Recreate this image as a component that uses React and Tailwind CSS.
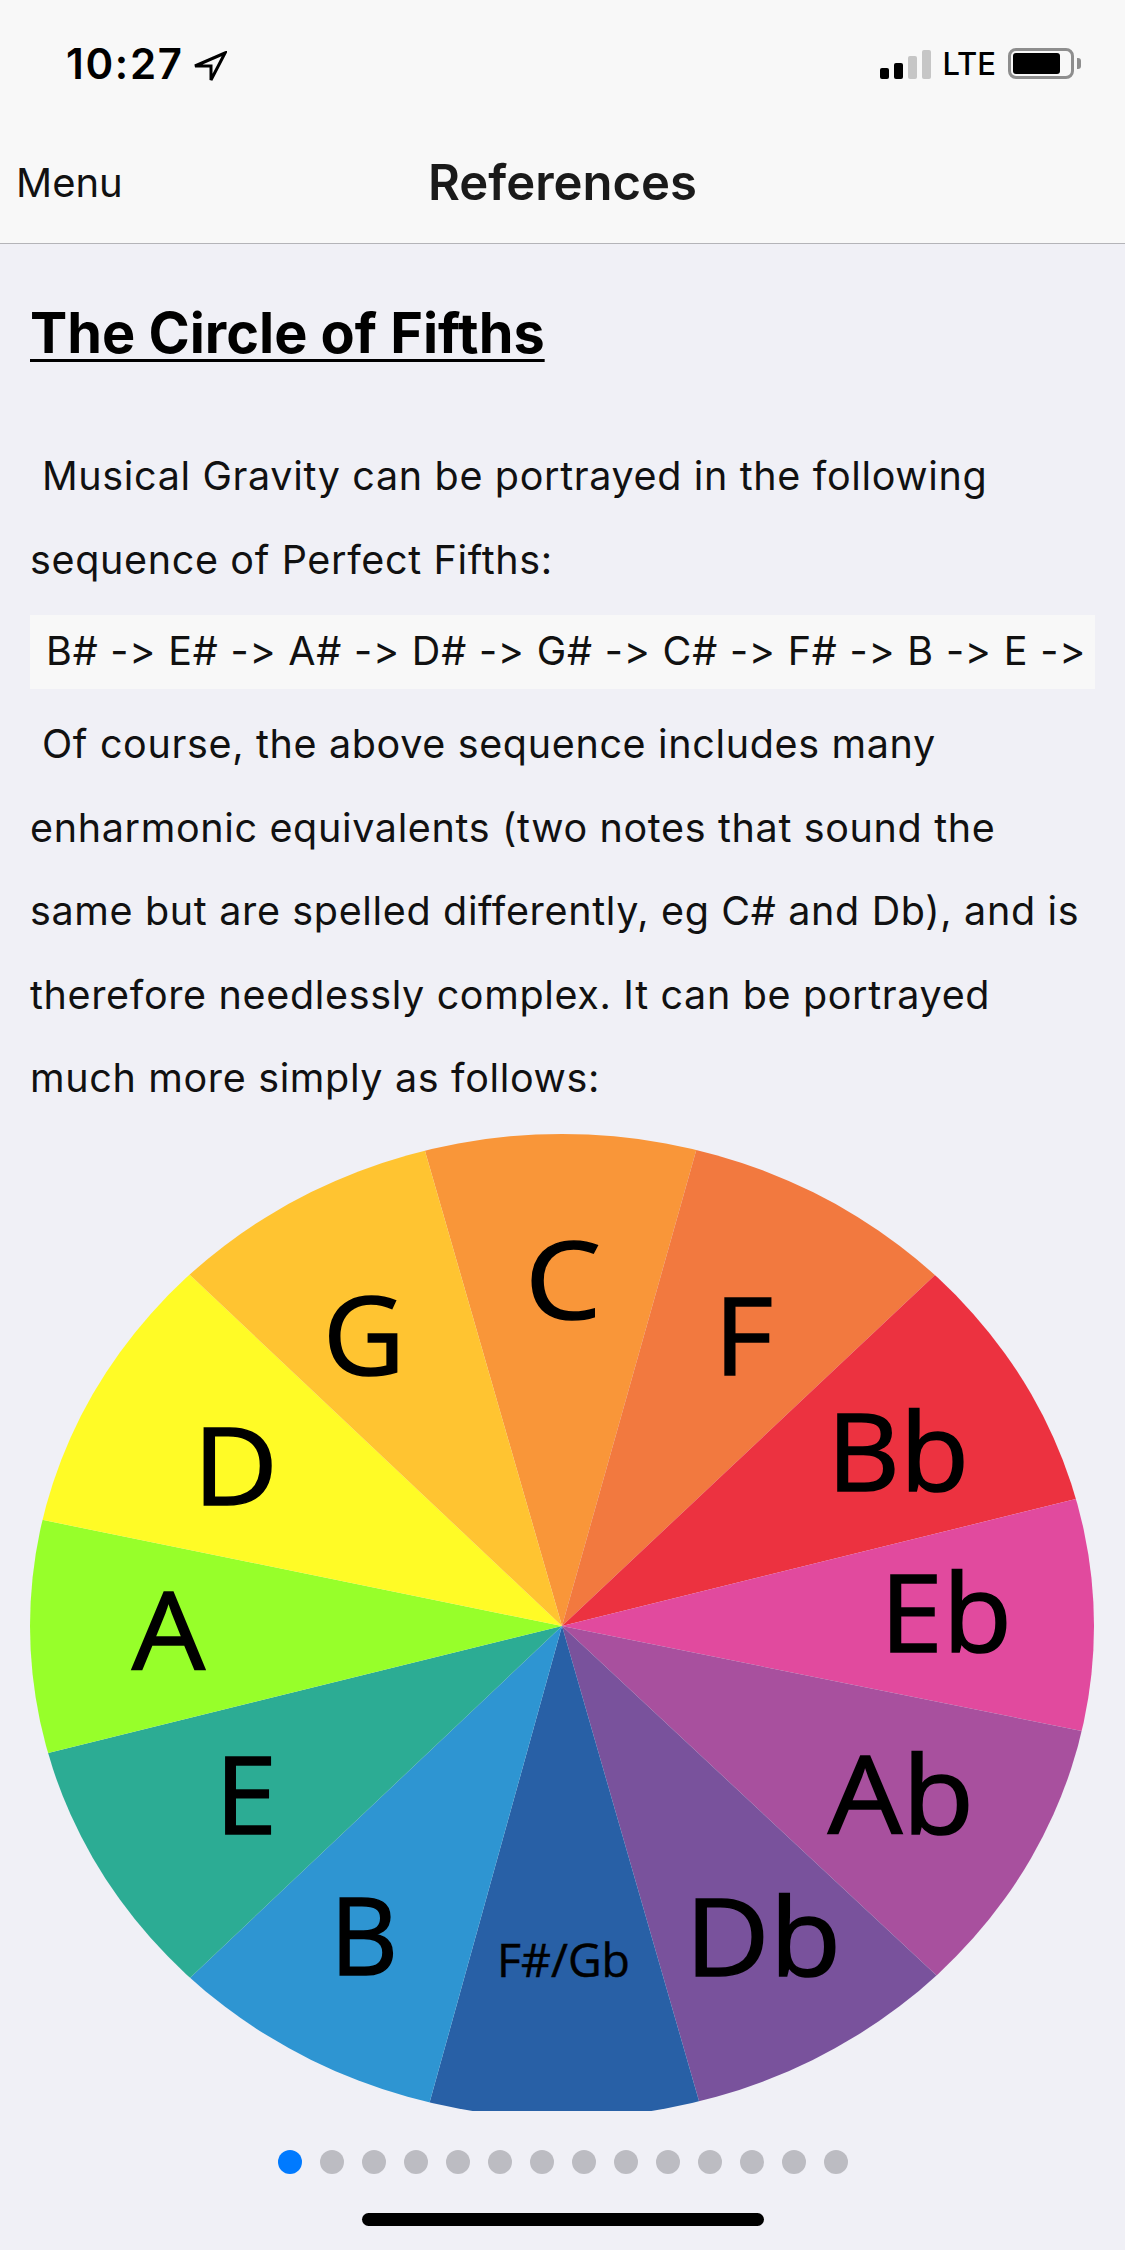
const FONT = "font-['Inter','Liberation_Sans',sans-serif] [font-feature-settings:'calt'_0,'liga'_0]";

// wheel geometry, in page pixels
const CX = 562;
const CY = 1625;
const wedges = [
  { color: "#f99639", from: [425, 1150], to: [696, 1150] },
  { color: "#f2793f", from: [696, 1150], to: [935, 1274] },
  { color: "#ec3240", from: [935, 1274], to: [1076, 1498] },
  { color: "#e14a9e", from: [1076, 1498], to: [1082, 1730] },
  { color: "#a8509e", from: [1082, 1730], to: [936, 1974] },
  { color: "#79529c", from: [936, 1974], to: [699, 2100] },
  { color: "#2860a6", from: [699, 2100], to: [430, 2100] },
  { color: "#2e95d2", from: [430, 2100], to: [192, 1975] },
  { color: "#2cac94", from: [192, 1975], to: [48, 1752] },
  { color: "#97ff2a", from: [48, 1752], to: [43, 1519] },
  { color: "#fffb26", from: [43, 1519], to: [190, 1274] },
  { color: "#ffc431", from: [190, 1274], to: [425, 1150] },
];

const labels = [
  { text: "C", x: 525, y: 1318, w: 76 },
  { text: "G", x: 323, y: 1374, w: 82 },
  { text: "F", x: 714, y: 1374, w: 59 },
  { text: "Bb", x: 827, y: 1490, w: 142 },
  { text: "D", x: 193, y: 1504, w: 85 },
  { text: "Eb", x: 880, y: 1651, w: 132 },
  { text: "A", x: 132, y: 1669, w: 73 },
  { text: "E", x: 215, y: 1833, w: 62 },
  { text: "Ab", x: 828, y: 1833, w: 146 },
  { text: "B", x: 330, y: 1974, w: 68 },
  { text: "Db", x: 685, y: 1975, w: 156 },
  { text: "F#/Gb", x: 497, y: 1976, w: 133, small: true },
];

// push the rim point out past the ellipse, the clip path trims it back
function far([x, y]) {
  return `${CX + (x - CX) * 1.15},${CY + (y - CY) * 1.15}`;
}

function Wheel() {
  return (
    <svg
      viewBox="30 1120 1065 990"
      className="block w-[1065px] h-[990px]"
    >
      <defs>
        <clipPath id="rim">
          <ellipse cx={CX} cy={CY} rx="532" ry="492" />
        </clipPath>
      </defs>
      <g clipPath="url(#rim)">
        {wedges.map((w, i) => (
          <polygon
            key={i}
            fill={w.color}
            points={`${CX},${CY} ${far(w.from)} ${far(w.to)}`}
          />
        ))}
      </g>
      {labels.map((l) => (
        <text
          key={l.text}
          x={l.x}
          y={l.y}
          textLength={l.w}
          lengthAdjust="spacingAndGlyphs"
          fontFamily="'Open Sans', sans-serif"
          fontWeight="500"
          fontSize={l.small ? 46 : 108}
          fill="#000"
          stroke="#000"
          strokeWidth={l.small ? 0.5 : 1.6}
        >
          {l.text}
        </text>
      ))}
    </svg>
  );
}

function StatusBar() {
  return (
    <div className="h-[127px] flex justify-between items-start pt-[42px] pl-[66px] pr-[44px]">
      <div className="flex items-start gap-[9px]">
        <span className="text-[42px] leading-[43px] font-semibold tracking-[1.7px] text-black">10:27</span>
        <svg width="34" height="31" viewBox="0 0 34 31" className="mt-[9px]">
          <path d="M32 2 L2 15 L18 15 L18 29 Z" fill="#f8f8f8" stroke="#000" strokeWidth="3" strokeLinejoin="miter" />
        </svg>
      </div>
      <div className="flex items-end h-[37px]">
        <div className="flex items-end gap-[5px]">
          <div className="w-[9px] h-[11px] rounded-[2px] bg-black"></div>
          <div className="w-[9px] h-[16px] rounded-[2px] bg-black"></div>
          <div className="w-[9px] h-[23px] rounded-[2px] bg-[#c6c6c6]"></div>
          <div className="w-[9px] h-[29px] rounded-[2px] bg-[#c6c6c6]"></div>
        </div>
        <span className="ml-[11px] mb-[-2px] text-[31px] leading-[34px] font-medium text-black">LTE</span>
        <div className="ml-[12px] flex items-center">
          <div className="w-[66px] h-[31px] border-[3px] border-[#8e8e8e] rounded-[8px] p-[2px]">
            <div className="w-[47px] h-full rounded-[3px] bg-black"></div>
          </div>
          <div className="ml-[3px] w-[4px] h-[11px] rounded-r-[3px] bg-[#8e8e8e]"></div>
        </div>
      </div>
    </div>
  );
}

function NavBar() {
  return (
    <div className="relative h-[116px] pb-[4px] flex items-center justify-center">
      <span className="absolute left-[16px] text-[40px] text-[#111]">Menu</span>
      <h1 className="text-[49px] font-semibold text-[#1a1a1a]">References</h1>
    </div>
  );
}

export default function App() {
  return (
    <div className={`${FONT} w-[1125px] h-[2250px] bg-[#f0f0f6] overflow-hidden`}>
      <header className="bg-[#f8f8f8] border-b border-[#b4b4b8]">
        <StatusBar />
        <NavBar />
      </header>

      <main className="px-[30px]">
        <h2 className="mt-[56px] text-[55.8px] leading-[66px] font-bold text-black underline decoration-[3px] underline-offset-[6px]">
          The Circle of Fifths
        </h2>
        <p className="mt-[69px] text-[39.5px] tracking-[0.65px] leading-[83.5px] text-[#111]">
          <span className="pl-[12px]">Musical Gravity can be portrayed in the following</span>
          <br />
          sequence of Perfect Fifths:
        </p>
        <div className="mt-[13px] h-[74px] bg-[#f8f8f8] overflow-hidden flex items-center pl-[16px]">
          <span className="whitespace-nowrap text-[39.5px] tracking-[0.8px] text-[#111]">
            B# -&gt; E# -&gt; A# -&gt; D# -&gt; G# -&gt; C# -&gt; F# -&gt; B -&gt; E -&gt; A -&gt; D -&gt; G -&gt; C -&gt; F
          </span>
        </div>
        <p className="mt-[14px] text-[39.5px] tracking-[0.65px] leading-[83.5px] text-[#111]">
          <span className="pl-[12px]">Of course, the above sequence includes many</span>
          <br />
          enharmonic equivalents (two notes that sound the
          <br />
          same but are spelled differently, eg C# and Db), and is
          <br />
          therefore needlessly complex. It can be portrayed
          <br />
          much more simply as follows:
        </p>
        <Wheel />
      </main>

      <div className="mt-[39px] flex justify-center gap-[18px]">
        {Array.from({ length: 14 }).map((_, i) => (
          <div
            key={i}
            className={i === 0 ? "w-[24px] h-[24px] rounded-full bg-[#007aff]" : "w-[24px] h-[24px] rounded-full bg-[#bcbcc2]"}
          ></div>
        ))}
      </div>
      <div className="mt-[39px] mx-auto w-[402px] h-[13px] rounded-full bg-black"></div>
    </div>
  );
}
